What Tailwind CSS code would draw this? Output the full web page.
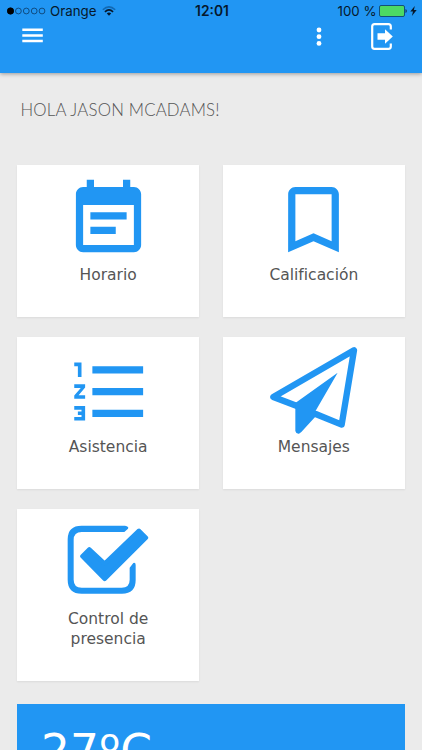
<!DOCTYPE html>
<html lang="es">
<head>
<meta charset="utf-8">
<meta name="viewport" content="width=device-width, initial-scale=1">
<title>Inicio</title>
<script src="https://cdn.jsdelivr.net/npm/@tailwindcss/browser@4"></script>
</head>
<body class="h-[750px] overflow-hidden bg-[#ebebeb] font-['DejaVu_Sans',sans-serif]">
<header class="h-[73px] bg-[#2196f3] shadow-[0_1px_4px_rgba(0,0,0,0.35)]">
  <div class="flex h-[23px] items-center justify-between pl-[7px] pr-[5px] font-[Inter,sans-serif] text-[13.3px] leading-none text-[#06182b]">
    <div class="flex w-[150px] items-center">
      <svg class="h-[8px] w-[39px]" viewBox="0 0 39 8" fill="none" stroke="#0b3a66" stroke-width=".8"><circle cx="3.5" cy="4" r="3.2" fill="#000" stroke="#000"/><circle cx="11.4" cy="4" r="2.9"/><circle cx="19.3" cy="4" r="2.9"/><circle cx="27.2" cy="4" r="2.9"/><circle cx="35" cy="4" r="2.9"/></svg>
      <span class="ml-[4px]">Orange</span>
      <svg class="ml-[6px] h-[10px] w-[14px]" viewBox="0 0 14 10" fill="none"><path d="M.8 3.7Q7-2 13.200 3.700" stroke="#1269b3" stroke-width="1.500"/><path d="M2.900 5.800Q7 2 11.100 5.800" stroke="#06182b" stroke-width="1.600"/><path d="M4.800 7.500Q7 5.700 9.200 7.500L7 9.800Z" fill="#06182b"/></svg>
    </div>
    <span class="text-[13.8px] font-semibold">12:01</span>
    <div class="flex w-[150px] items-center justify-end">
      <span>100 %</span>
      <svg class="ml-[2.5px] h-[12px] w-[28px]" viewBox="0 0 28 12"><rect x=".5" y=".5" width="25" height="11" rx="1.500" fill="#4cd964" stroke="#12507a"/><path d="M26.500 4v4q1.300-.5 1.300-2t-1.300-2" fill="#12304f"/></svg>
      <svg class="ml-[3px] h-[10px] w-[7px]" viewBox="0 0 7 10"><path d="M4.800 0L.3 5.600H3L1.900 10L6.700 4H3.900Z" fill="#06182b"/></svg>
    </div>
  </div>
  <div class="flex h-[28px] items-center pl-[22px]">
    <svg class="mb-[4px] h-[15px] w-[21px]" viewBox="0 0 21 15" fill="#fff"><path d="M.3 .5h20.500v2.500H.3zM.3 6.200h20.500v2.500H.3zM.3 11.700h20.500v2.500H.3z"/></svg>
    <svg class="ml-[273px] h-[20px] w-[6px]" viewBox="0 0 6 20" fill="#fff"><circle cx="3" cy="3" r="2.400"/><circle cx="3" cy="9.700" r="2.400"/><circle cx="3" cy="16.400" r="2.400"/></svg>
    <svg class="ml-[48px] h-[28px] w-[24px]" viewBox="0 0 24 28"><path d="M20.800 6.500V3.500Q20.800 1.200 18.500 1.200H4.500Q2.200 1.200 2.200 3.500V23.500Q2.200 25.800 4.500 25.800H18.500Q20.800 25.800 20.800 23.500V20.500" fill="none" stroke="#fff" stroke-width="2.200"/><path d="M7.500 10.300h7.500V6.300L22.800 13.500L15 20.700V16.700H7.500Z" fill="#fff"/></svg>
  </div>
</header>
<main class="px-[17px]">
  <h1 class="flex h-[92px] items-start pl-[3.500px] pt-[27px] font-[Lato,sans-serif] text-[16.800px] font-light leading-[20px] tracking-[0.180px] whitespace-nowrap text-[#555]">HOLA JASON MCADAMS!</h1>
  <div class="grid grid-cols-[182.300px_182.300px] gap-x-[23.400px] gap-y-[20px] text-center text-[15.500px] leading-[20px] text-[#555]">
    <section class="flex h-[152px] flex-col items-center bg-white pt-[11px] shadow-[0_1px_2px_rgba(0,0,0,0.07)]">
      <svg class="size-[87px] shrink-0" viewBox="0 0 24 24" fill="#2196f3"><path d="M17 10H7v2h10v-2zm2-7h-1V1h-2v2H8V1H6v2H5c-1.110 0-1.990.9-1.990 2L3 19c0 1.100.89 2 2 2h14c1.100 0 2-.9 2-2V5c0-1.100-.9-2-2-2zm0 16H5V8h14v11zm-5-5H7v2h7v-2z"/></svg>
      <p class="mt-[2px]">Horario</p>
    </section>
    <section class="flex h-[152px] flex-col items-center bg-white pt-[11px] shadow-[0_1px_2px_rgba(0,0,0,0.07)]">
      <svg class="size-[87px] shrink-0" viewBox="0 0 24 24" fill="#2196f3"><path d="M17 3H7c-1.100 0-1.990.9-1.990 2L5 21l7-3 7 3V5c0-1.100-.9-2-2-2zm0 15l-5-2.180L7 18V5h10v13z"/></svg>
      <p class="mt-[2px]">Calificación</p>
    </section>
    <section class="flex h-[152px] flex-col items-center bg-white pt-[11px] shadow-[0_1px_2px_rgba(0,0,0,0.07)]">
      <svg class="ml-[4px] size-[87px] shrink-0" viewBox="0 0 24 24" fill="#2196f3"><path d="M2 17h2v.5H3v1h1v.5H2v1h3v-4H2v1zm1-9h1V4H2v1h1v3zm-1 3h1.800L2 13.100v.9h3v-1H3.200L5 10.900V10H2v1zm5-6v2h14V5H7zm0 14h14v-2H7v2zm0-6h14v-2H7v2z"/></svg>
      <p class="mt-[2px]">Asistencia</p>
    </section>
    <section class="flex h-[152px] flex-col items-center bg-white pt-[8px] shadow-[0_1px_2px_rgba(0,0,0,0.07)]">
      <svg class="h-[90px] w-[88px] shrink-0" viewBox="165 45 264 270" fill="none" stroke="#2196f3" stroke-width="19" stroke-linejoin="round" stroke-linecap="round"><path d="M246 228L175 201L417 61L380 284L302 252"/><path d="M368 128L241 219V303Q243 312 252 311L259 306L303 258L302 242Z" fill="#2196f3" stroke="none"/></svg>
      <p class="mt-[2px]">Mensajes</p>
    </section>
    <section class="flex h-[172px] flex-col items-center bg-white pt-[14px] shadow-[0_1px_2px_rgba(0,0,0,0.07)]">
      <svg class="h-[72px] w-[82px] shrink-0" viewBox="172 69 246 216"><path d="M344 96H216Q192 96 192 120V239Q192 263 216 263H336Q360 263 360 239V203L371 189Q378 187 378 195V240Q378 281 337 281H216Q174 281 174 239V118Q174 77 216 77H346Q359 80 355 86Z" fill="#2196f3"/><path d="M218 169L239 148L285 191L388 92L409 113L285 237Z" fill="#2196f3" stroke="#2196f3" stroke-width="13" stroke-linejoin="round"/></svg>
      <p class="mt-[14px] w-[120px]">Control de presencia</p>
    </section>
  </div>
  <section class="mt-[22.500px] h-[46.500px] overflow-hidden bg-[#2196f3] pl-[24px] pt-[23px] text-[45.500px] leading-[50px] text-white">27ºC</section>
</main>
</body>
</html>
